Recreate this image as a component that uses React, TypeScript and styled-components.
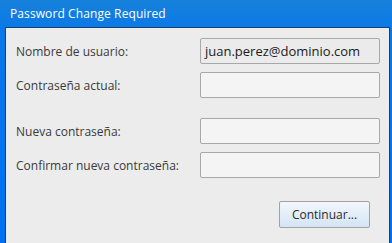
import React from "react";
import styled, { createGlobalStyle } from "styled-components";

const frameBlue = "#0a78e8";
const panelGrey = "#ececec";
const fieldBorder = "#a8a8a8";

const GlobalStyle = createGlobalStyle`
  html, body {
    margin: 0;
    padding: 0;
    width: 392px;
    height: 243px;
    overflow: hidden;
    font-family: "Open Sans", "Noto Sans", sans-serif;
  }
`;

const Window = styled.div`
  width: 392px;
  height: 243px;
  background: linear-gradient(to bottom, #1682dc 0px, ${frameBlue} 30px, #0070f2 243px);
  display: flex;
  flex-direction: column;
`;

const TitleBar = styled.div`
  height: 27px;
  display: flex;
  align-items: center;
  padding-left: 10px;
  color: #ffffff;
  font-size: 12px;
  letter-spacing: 0.1px;
`;

const Body = styled.div`
  flex: 1;
  margin: 0 2px 0 5px;
  border: 1px solid #14426e;
  border-bottom: none;
  background: ${panelGrey};
  padding: 10px 9px 0 10px;
  display: flex;
  flex-direction: column;
`;

const Form = styled.div`
  display: grid;
  grid-template-columns: 184px 180px;
`;

const Row = styled.div<{ $gap?: number }>`
  display: contents;
  & > * {
    margin-top: ${(p) => p.$gap ?? 0}px;
  }
`;

const Label = styled.label`
  display: flex;
  align-items: center;
  font-size: 12px;
  color: #3a3a3a;
  height: 26px;
`;

const Field = styled.div<{ $filled?: boolean }>`
  box-sizing: border-box;
  height: 26px;
  border: 1px solid ${fieldBorder};
  border-radius: 2px;
  background: ${(p) => (p.$filled ? "#ebebeb" : "#f4f4f4")};
  display: flex;
  align-items: center;
  padding: 0 4px 1px;
  font-size: 13px;
  color: #1a1a1a;
`;

const Footer = styled.div`
  display: flex;
  justify-content: flex-end;
  padding-top: 23px;
  padding-right: 10px;
`;

const Button = styled.button`
  box-sizing: border-box;
  width: 91px;
  height: 27px;
  border: 1px solid #a2a2a2;
  border-radius: 2px;
  background: linear-gradient(to bottom, #f3f7fb, #d3e4f5);
  font-family: inherit;
  font-size: 12px;
  color: #2a2a2a;
  padding: 0;
`;

export default function App() {
  return (
    <>
      <GlobalStyle />
      <Window>
        <TitleBar>Password Change Required</TitleBar>
        <Body>
          <Form>
            <Row>
              <Label>Nombre de usuario:</Label>
              <Field $filled>juan.perez@dominio.com</Field>
            </Row>
            <Row $gap={8}>
              <Label>Contraseña actual:</Label>
              <Field />
            </Row>
            <Row $gap={20}>
              <Label>Nueva contraseña:</Label>
              <Field />
            </Row>
            <Row $gap={8}>
              <Label>Confirmar nueva contraseña:</Label>
              <Field />
            </Row>
          </Form>
          <Footer>
            <Button>Continuar...</Button>
          </Footer>
        </Body>
      </Window>
    </>
  );
}
